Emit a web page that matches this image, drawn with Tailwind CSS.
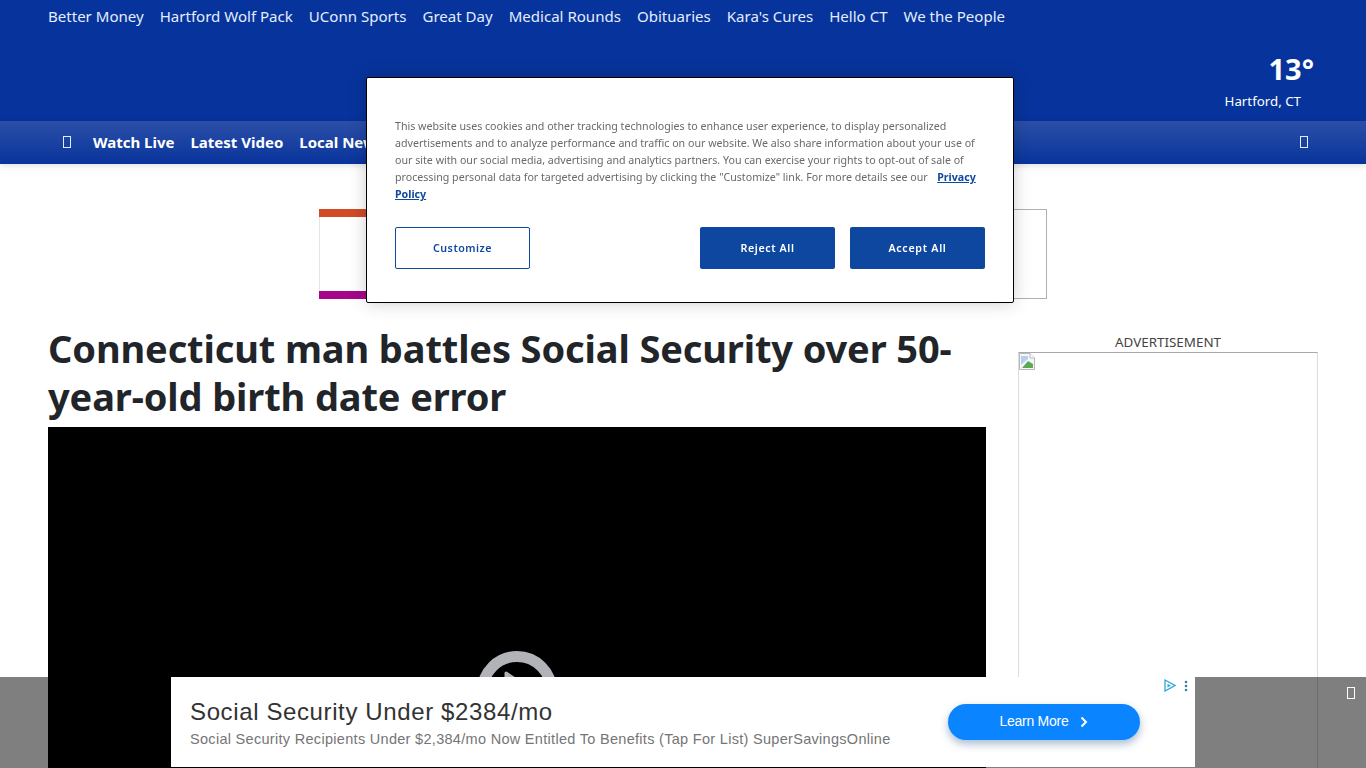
<!DOCTYPE html>
<html lang="en">
<head>
    <meta charset="UTF-8">
    <meta name="viewport" content="width=device-width, initial-scale=1.0">
    <title>Connecticut man battles Social Security over 50-year-old birth date error</title>
    <script src="https://cdn.jsdelivr.net/npm/@tailwindcss/browser@4"></script>
</head>
<body class="h-screen overflow-hidden bg-white font-['Noto_Sans',sans-serif] text-[#212529]">
    <!-- header -->
    <header class="h-[121px] bg-[#07339c] relative px-12">
        <nav class="flex gap-4 pt-[4px] text-[15.05px] leading-[24px] text-[#e3eefc]">
            <a href="#">Better Money</a>
            <a href="#">Hartford Wolf Pack</a>
            <a href="#">UConn Sports</a>
            <a href="#">Great Day</a>
            <a href="#">Medical Rounds</a>
            <a href="#">Obituaries</a>
            <a href="#">Kara's Cures</a>
            <a href="#">Hello CT</a>
            <a href="#">We the People</a>
        </nav>
        <div class="absolute right-[52px] top-[50px] flex flex-col items-end text-white">
            <div class="text-[29px] leading-[38px] font-bold">13°</div>
            <div class="text-[13.3px] leading-[26px] pr-[13px]">Hartford, CT</div>
        </div>
    </header>

    <!-- main nav -->
    <nav class="h-[43px] bg-linear-to-b from-[#2b4fa7] to-[#07339c] shadow-[0_2px_6px_rgba(0,0,0,0.12)] flex items-center pl-[63px] pr-[58px] text-white text-[15px] font-bold relative">
        <span class="w-[8px] h-[12px] border border-[#e3eefc] mr-[22px] -mt-[1px]"></span>
        <a href="#" class="mr-4">Watch Live</a>
        <a href="#" class="mr-4">Latest Video</a>
        <a href="#" class="mr-4">Local News</a>
        <span class="w-[8px] h-[12px] border border-[#e3eefc] ml-auto -mt-[2px]"></span>
    </nav>

    <!-- top ad -->
    <div class="w-[728px] h-[90px] mx-auto mt-[45px] flex flex-col justify-between border-r border-t border-b border-[#b0b0b0] border-l-[#e5e5e5] border-l relative">
        <div class="h-[8px] w-[60px] -mt-px -ml-px bg-[#d24b27]"></div>
        <div class="h-[8px] w-[60px] -mb-px -ml-px bg-[#a5068a]"></div>
    </div>

    <!-- content -->
    <main class="flex gap-8 pl-12 pt-[25px]">
        <article class="w-[938px]">
            <h1 class="text-[38px] leading-[48px] tracking-[-0.12px] font-bold">Connecticut man battles Social Security over 50-year-old birth date error</h1>
            <div class="h-[341px] mt-[7px] bg-black flex justify-center pt-[224px]">
                <svg width="80" height="80" viewBox="0 0 80 80">
                    <circle cx="40" cy="40" r="34.5" fill="none" stroke="#b1b3b8" stroke-width="11"/>
                    <path d="M29 22 L56 40 L29 58 Z" fill="#b1b3b8" stroke="#b1b3b8" stroke-width="3" stroke-linejoin="round"/>
                </svg>
            </div>
        </article>
        <aside class="w-[300px]">
            <div class="text-[13.4px] leading-[20px] text-center text-[#444] mt-[8px]">ADVERTISEMENT</div>
            <div class="h-[416px] border border-b-0 border-[#ddd] border-t-[#aaa]">
                <svg width="16" height="17" viewBox="0 0 16 17">
                    <path d="M0.5 0.5 H11 L15.5 5 V16.5 H0.5 Z" fill="#f4f6f8" stroke="#b4b8bd"/>
                    <path d="M11 0.5 V5 H15.5" fill="#fff" stroke="#b4b8bd"/>
                    <path d="M2 3 H9 V6 L4 10 L2 12 Z" fill="#b6cdee"/>
                    <path d="M3 15 L9 8 L14 11 V15 Z" fill="#5ea855"/>
                </svg>
            </div>
        </aside>
    </main>

    <!-- cookie dialog -->
    <div role="dialog" class="fixed left-[366px] top-[77px] w-[648px] h-[226px] bg-white border border-black rounded-[2px] shadow-[0_0_18px_rgba(0,0,0,0.2)] px-[28px] pt-[40px]">
        <p class="text-[10.65px] leading-[17px] text-[#696969] w-[590px]">
            This website uses cookies and other tracking technologies to enhance user experience, to display personalized advertisements and to analyze performance and traffic on our website. We also share information about your use of our site with our social media, advertising and analytics partners. You can exercise your rights to opt-out of sale of processing personal data for targeted advertising by clicking the "Customize" link. For more details see our&nbsp;
            <a href="#" class="ml-[4px] font-bold text-[#0e479f] underline">Privacy Policy</a>
        </p>
        <div class="flex gap-[15px] mt-[24px] w-[590px] text-[10.7px] leading-none font-semibold tracking-[0.5px]">
            <button class="w-[135px] h-[42px] mr-auto rounded-[2px] border border-[#0e479f] text-[#0e479f] bg-white">Customize</button>
            <button class="w-[135px] h-[42px] rounded-[2px] bg-[#0e479f] text-white tracking-[0.6px]">Reject All</button>
            <button class="w-[135px] h-[42px] rounded-[2px] bg-[#0e479f] text-white tracking-[0.7px]">Accept All</button>
        </div>
    </div>

    <!-- sticky bottom ad -->
    <div class="fixed left-0 right-0 bottom-0 h-[91px] bg-black/50">
        <div class="w-[1024px] h-[90px] mx-auto bg-white relative font-['Liberation_Sans',sans-serif] flex items-center pl-[19px] pr-[55px]">
            <div class="flex-1 pt-[2px]">
                <div class="text-[24px] leading-[30px] tracking-[0.62px] text-[#333]">Social Security Under $2384/mo</div>
                <div class="text-[14.5px] leading-[20px] mt-[2px] tracking-[0.3px] text-[#757575]">Social Security Recipients Under $2,384/mo Now Entitled To Benefits (Tap For List) SuperSavingsOnline</div>
            </div>
            <a href="#" class="w-[192px] h-[36px] pb-[2px] rounded-full bg-[#0a84ff] shadow-[0_4px_8px_rgba(0,60,120,0.35)] text-white text-[14px] tracking-[-0.27px] flex items-center justify-center gap-[12px]">
                Learn More
                <svg width="8" height="12" viewBox="0 0 8 12" class="mt-[2px]"><path d="M1.5 1.5 L6 6 L1.5 10.5" fill="none" stroke="#fff" stroke-width="2"/></svg>
            </a>
            <!-- adchoices icons -->
            <svg width="12" height="13" viewBox="0 0 12 13" class="absolute left-[993px] top-[2px]">
                <path d="M1 1 L11 6.5 L1 12 Z" fill="none" stroke="#2aa8dc" stroke-width="1.3"/>
                <path d="M3.5 5 L7 6.5 L3.5 8.5 Z" fill="#2aa8dc"/>
            </svg>
            <svg width="4" height="12" viewBox="0 0 4 12" class="absolute left-[1013px] top-[3px]">
                <circle cx="2" cy="2" r="1.3" fill="#3a7f9e"/>
                <circle cx="2" cy="6" r="1.3" fill="#3a7f9e"/>
                <circle cx="2" cy="10" r="1.3" fill="#3a7f9e"/>
            </svg>
        </div>
        <span class="absolute right-[11px] top-[10px] w-[8px] h-[12px] border border-white"></span>
    </div>
</body>
</html>
